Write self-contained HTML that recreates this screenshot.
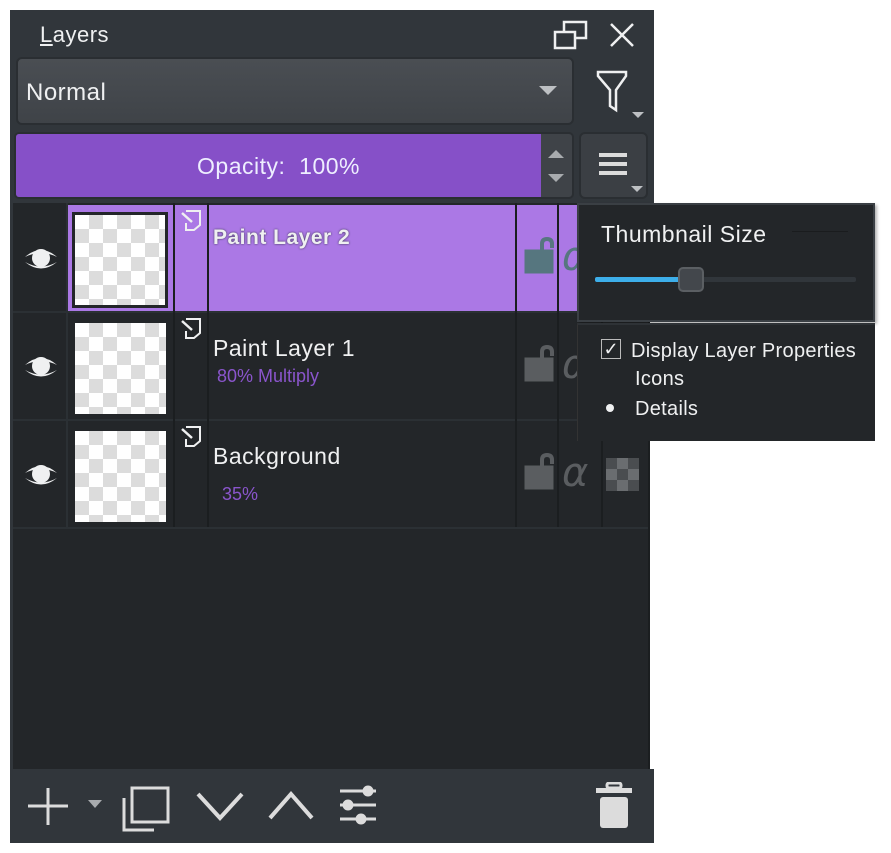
<!DOCTYPE html>
<html><head><style>
*{box-sizing:border-box;margin:0;padding:0}
body{width:891px;height:853px;background:#fff;position:relative;overflow:hidden;font-family:"Liberation Sans",sans-serif}
.a{position:absolute}
.chk{background-color:#fff;background-image:linear-gradient(45deg,#dcdcdc 25%,transparent 25%,transparent 75%,#dcdcdc 75%),linear-gradient(45deg,#dcdcdc 25%,transparent 25%,transparent 75%,#dcdcdc 75%);background-size:28px 28px;background-position:0 0,14px 14px}
.t{color:#eff0f1;font-size:23px;letter-spacing:0.5px}
.al{position:absolute;font:italic 40px "DejaVu Sans",sans-serif}
</style></head><body>
<div class="a" style="left:10px;top:10px;width:644px;height:833px;background:#31363b"></div>
<div class="a t" style="left:40px;top:22px;font-size:22px;"><u>L</u>ayers</div>
<svg class="a" style="left:553px;top:20px" width="36" height="30"><rect x="11" y="2" width="22" height="16" fill="none" stroke="#eff0f1" stroke-width="2.5"/><rect x="2" y="12" width="20" height="16" fill="#31363b" stroke="#eff0f1" stroke-width="2.5"/></svg>
<svg class="a" style="left:608px;top:22px" width="28" height="26"><path d="M3 2 L25 24 M25 2 L3 24" stroke="#eff0f1" stroke-width="2.5"/></svg>
<div class="a" style="left:16px;top:57px;width:558px;height:68px;border-radius:6px;background:linear-gradient(#4a4e53,#3f4348);border:2px solid #2a2e32"></div>
<div class="a t" style="left:26px;top:79px;font-size:24px">Normal</div>
<svg class="a" style="left:538px;top:85px" width="20" height="12"><path d="M1 1 L19 1 L10 10Z" fill="#bdc0c3"/></svg>
<svg class="a" style="left:594px;top:68px" width="54" height="54"><path d="M4 4 L32 4 L32 8 L22 22 L22 42 L16 38 L16 22 L4 8Z" fill="none" stroke="#eff0f1" stroke-width="2.5" stroke-linejoin="miter"/><path d="M38 44 L50 44 L44 50Z" fill="#bdc0c3"/></svg>
<div class="a" style="left:14px;top:132px;width:560px;height:67px;border-radius:5px;background:#3f4348;border:2px solid #2a2e32"></div>
<div class="a" style="left:16px;top:134px;width:525px;height:63px;background:#8650c8;border-radius:3px 0 0 3px"></div>
<div class="a t" style="left:16px;top:153px;width:525px;text-align:center;color:#eef;font-size:23px">Opacity:&nbsp; 100%</div>
<svg class="a" style="left:545px;top:148px" width="22" height="42"><path d="M3 10 L19 10 L11 2Z M3 26 L19 26 L11 34Z" fill="#a8abae"/></svg>
<div class="a" style="left:579px;top:132px;width:69px;height:67px;border-radius:6px;background:#3b3f44;border:2px solid #2a2e32"></div>
<div class="a" style="left:599px;top:153px;width:28px;height:4px;background:#dcdcdc"></div>
<div class="a" style="left:599px;top:162px;width:28px;height:4px;background:#dcdcdc"></div>
<div class="a" style="left:599px;top:171px;width:28px;height:4px;background:#dcdcdc"></div>
<svg class="a" style="left:630px;top:185px" width="14" height="8"><path d="M1 1 L13 1 L7 7Z" fill="#bdc0c3"/></svg>
<div class="a" style="left:13px;top:203px;width:636px;height:566px;background:#232629"></div>
<div class="a" style="left:67px;top:205px;width:580px;height:106px;background:#ab78e5"></div>
<div class="a" style="left:13px;top:311px;width:636px;height:2px;background:#2b3034"></div>
<div class="a" style="left:13px;top:419px;width:636px;height:2px;background:#2b3034"></div>
<div class="a" style="left:13px;top:527px;width:636px;height:2px;background:#2b3034"></div>
<div class="a" style="left:66px;top:203px;width:2px;height:324px;background:#2b3034"></div>
<div class="a" style="left:173px;top:203px;width:2px;height:324px;background:#1b1e20"></div>
<div class="a" style="left:207px;top:203px;width:2px;height:324px;background:#1b1e20"></div>
<div class="a" style="left:515px;top:203px;width:2px;height:324px;background:#1b1e20"></div>
<div class="a" style="left:557px;top:203px;width:2px;height:324px;background:#1b1e20"></div>
<div class="a" style="left:601px;top:203px;width:2px;height:324px;background:#1b1e20"></div>
<div class="a chk" style="left:72px;top:212px;width:96px;height:96px;border:3px solid #232629"></div>
<div class="a chk" style="left:75px;top:323px;width:91px;height:91px"></div>
<div class="a chk" style="left:75px;top:431px;width:91px;height:91px"></div>
<svg width="0" height="0" style="position:absolute"><defs>
<g id="eye"><path d="M2 12 Q18 -2 34 12 Q18 4 2 12Z" fill="#eff0f1"/><circle cx="18" cy="13" r="9" fill="#eff0f1"/><path d="M2 17 Q18 30 34 17 Q18 26 2 17Z" fill="#eff0f1"/></g>
<g id="doc"><path d="M6 3 L20 3 L20 17 L14 22 L6 22 L6 15" fill="none" stroke="#eff0f1" stroke-width="2"/><path d="M2 5 L12 14" stroke="#eff0f1" stroke-width="2.5"/></g>
<g id="lock"><rect x="1" y="14" width="28" height="23"/><path d="M18 14 L18 8 Q18 3 23 3 Q28 3 28 8 L28 12" fill="none" stroke-width="4"/></g>
</defs></svg>
<svg class="a" style="left:23px;top:245px" width="36" height="30"><use href="#eye"/></svg>
<svg class="a" style="left:23px;top:353px" width="36" height="30"><use href="#eye"/></svg>
<svg class="a" style="left:23px;top:461px" width="36" height="30"><use href="#eye"/></svg>
<svg class="a" style="left:180px;top:208px" width="26" height="26"><use href="#doc"/></svg>
<svg class="a" style="left:180px;top:316px" width="26" height="26"><use href="#doc"/></svg>
<svg class="a" style="left:180px;top:424px" width="26" height="26"><use href="#doc"/></svg>
<div class="a t" style="left:213px;top:226px;font-weight:bold;font-size:21px;text-shadow:0 0 2px #334">Paint Layer 2</div>
<div class="a t" style="left:213px;top:335px">Paint Layer 1</div>
<div class="a" style="left:217px;top:366px;color:#8a55cc;font-size:18px">80% Multiply</div>
<div class="a t" style="left:213px;top:443px">Background</div>
<div class="a" style="left:222px;top:484px;color:#8a55cc;font-size:18px">35%</div>
<svg class="a" style="left:524px;top:236px" width="30" height="38" fill="#56767f" stroke="#56767f"><use href="#lock"/></svg>
<svg class="a" style="left:524px;top:344px" width="30" height="38" fill="#5a5d60" stroke="#5a5d60"><use href="#lock"/></svg>
<svg class="a" style="left:524px;top:452px" width="30" height="38" fill="#5a5d60" stroke="#5a5d60"><use href="#lock"/></svg>
<div class="al" style="left:562px;top:234px;color:#56767f">α</div>
<div class="al" style="left:562px;top:342px;color:#5a5d60">α</div>
<div class="al" style="left:562px;top:450px;color:#5a5d60">α</div>
<div class="a" style="left:606px;top:458px;width:33px;height:33px;background-color:#4a4d50;background-image:linear-gradient(45deg,#6a6d70 25%,transparent 25%,transparent 75%,#6a6d70 75%),linear-gradient(45deg,#6a6d70 25%,transparent 25%,transparent 75%,#6a6d70 75%);background-size:22px 22px;background-position:0 0,11px 11px"></div>
<div class="a" style="left:649px;top:203px;width:5px;height:566px;background:#fff"></div>
<div class="a" style="left:648px;top:203px;width:2px;height:566px;background:#1b1e20"></div>
<div class="a" style="left:577px;top:203px;width:298px;height:119px;background:#232629;border:2px solid #3a3f44;box-shadow:2px 2px 3px rgba(0,0,0,.3)"></div>
<div class="a t" style="left:601px;top:221px;font-size:23px">Thumbnail Size</div>
<div class="a" style="left:792px;top:231px;width:56px;height:1px;background:#1a1c1e"></div>
<div class="a" style="left:595px;top:277px;width:261px;height:5px;background:#31363b;border-radius:2px"></div>
<div class="a" style="left:595px;top:277px;width:90px;height:5px;background:#3daee9;border-radius:2px"></div>
<div class="a" style="left:678px;top:267px;width:26px;height:25px;background:#43474c;border:2px solid #5b5f63;border-radius:5px"></div>
<div class="a" style="left:577px;top:323px;width:298px;height:118px;background:#232629;border-top:2px solid #2e3236;border-left:1px solid #333"></div>
<div class="a" style="left:601px;top:339px;width:20px;height:20px;border:1px solid #bbb;color:#eff0f1;font-size:18px;line-height:18px;text-align:center">✓</div>
<div class="a t" style="left:631px;top:340px;font-size:20px;letter-spacing:0.3px">Display Layer Properties</div>
<div class="a t" style="left:635px;top:368px;font-size:20px;letter-spacing:0.3px">Icons</div>
<div class="a" style="left:606px;top:404px;width:8px;height:8px;border-radius:50%;background:#eff0f1"></div>
<div class="a t" style="left:635px;top:398px;font-size:20px;letter-spacing:0.3px">Details</div>
<svg class="a" style="left:20px;top:780px" width="400" height="55" fill="none" stroke="#dcdcdc" stroke-width="3">
<path d="M28 8 L28 45 M8 26 L48 26"/>
<path d="M68 20 L82 20 L75 28Z" fill="#a8abae" stroke="none"/>
<path d="M112 8 L148 8 L148 42 L112 42Z M104 18 L104 50 L134 50"/>
<path d="M178 14 L200 38 L222 14" stroke-width="4"/>
<path d="M250 38 L271 14 L292 38" stroke-width="4"/>
<path d="M320 11 L356 11 M320 25 L356 25 M320 39 L356 39"/>
<circle cx="348" cy="11" r="4" fill="#dcdcdc"/><circle cx="328" cy="25" r="4" fill="#dcdcdc"/><circle cx="341" cy="39" r="4" fill="#dcdcdc"/>
</svg>
<svg class="a" style="left:594px;top:782px" width="44" height="48" fill="#dcdcdc"><rect x="13" y="1" width="14" height="5" rx="2" fill="none" stroke="#dcdcdc" stroke-width="3"/><rect x="2" y="6" width="36" height="5"/><rect x="6" y="15" width="28" height="31" rx="3"/></svg>
</body></html>
